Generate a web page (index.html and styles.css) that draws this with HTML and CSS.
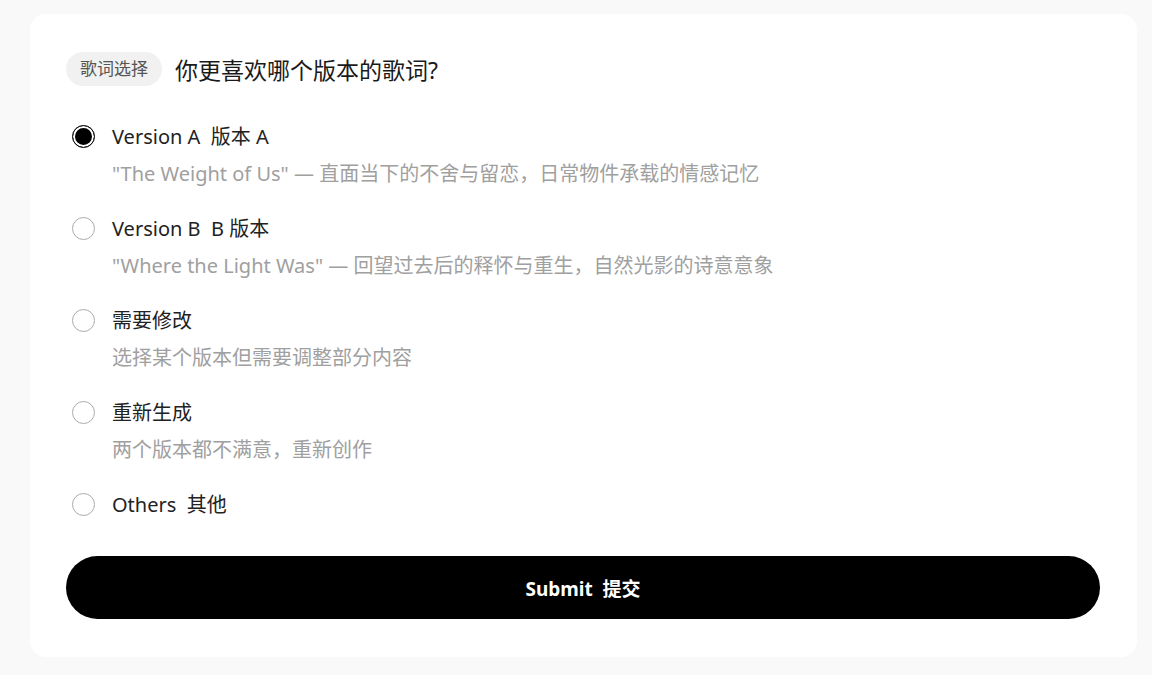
FILE: index.html
```html
<!DOCTYPE html>
<html lang="zh-CN">
<head>
  <meta charset="UTF-8">
  <meta name="viewport" content="width=device-width, initial-scale=1.0">
  <title>歌词选择</title>
  <link rel="stylesheet" href="styles.css">
</head>
<body>
  <div class="card">
    <div class="question">
      <span class="tag">歌词选择</span>
      <span class="question-text">你更喜欢哪个版本的歌词?</span>
    </div>

    <div class="options">
      <label class="option">
        <input type="radio" name="lyrics" checked>
        <span class="option-body">
          <span class="option-label">Version A&nbsp; 版本 A</span>
          <span class="option-desc">"The Weight of Us" — 直面当下的不舍与留恋，日常物件承载的情感记忆</span>
        </span>
      </label>
      <label class="option">
        <input type="radio" name="lyrics">
        <span class="option-body">
          <span class="option-label">Version B&nbsp; B 版本</span>
          <span class="option-desc">"Where the Light Was" — 回望过去后的释怀与重生，自然光影的诗意意象</span>
        </span>
      </label>
      <label class="option">
        <input type="radio" name="lyrics">
        <span class="option-body">
          <span class="option-label">需要修改</span>
          <span class="option-desc">选择某个版本但需要调整部分内容</span>
        </span>
      </label>
      <label class="option">
        <input type="radio" name="lyrics">
        <span class="option-body">
          <span class="option-label">重新生成</span>
          <span class="option-desc">两个版本都不满意，重新创作</span>
        </span>
      </label>
      <label class="option">
        <input type="radio" name="lyrics">
        <span class="option-body">
          <span class="option-label">Others&nbsp; 其他</span>
        </span>
      </label>
    </div>

    <button class="submit-button">Submit&nbsp; 提交</button>
  </div>
</body>
</html>
```

FILE: styles.css
```css
body {
  margin: 0;
  background-color: #f9f9f9;
  font-family: "Noto Sans", "Noto Sans CJK SC", sans-serif;
  color: #222;
}

.card {
  margin: 14px 15px 0 30px;
  height: 643px;
  box-sizing: border-box;
  background-color: #ffffff;
  border-radius: 16px;
  padding: 38px 37px 38px 36px;
  display: flex;
  flex-direction: column;
}

.question {
  display: flex;
  align-items: center;
  height: 34px;
}

.tag {
  background-color: #f1f1f1;
  color: #555;
  font-size: 17px;
  height: 34px;
  line-height: 34px;
  padding: 0 14px;
  border-radius: 17px;
  margin-right: 13px;
}

.question-text {
  font-size: 23px;
  color: #1a1a1a;
}

.options {
  display: flex;
  flex-direction: column;
  gap: 25px;
  margin-top: 36px;
}

.option {
  display: flex;
  align-items: flex-start;
  cursor: pointer;
}

.option input {
  appearance: none;
  -webkit-appearance: none;
  width: 23px;
  height: 23px;
  margin: 3px 17px 0 6px;
  border: 1.5px solid #ababab;
  border-radius: 50%;
  box-sizing: border-box;
  flex-shrink: 0;
  background-color: #fff;
}

.option input:checked {
  border: 1.5px solid #111;
  background-color: #000;
  box-shadow: inset 0 0 0 2px #fff;
}

.option-body {
  display: flex;
  flex-direction: column;
}

.option-label {
  font-size: 20px;
  line-height: 30px;
  color: #222;
}

.option-desc {
  font-size: 20px;
  line-height: 30px;
  margin-top: 7px;
  color: #a0a0a0;
}

.submit-button {
  margin-top: 36px;
  height: 63px;
  border: none;
  border-radius: 32px;
  background-color: #000;
  color: #fff;
  font-family: "Noto Sans", "Noto Sans CJK SC", sans-serif;
  font-size: 19px;
  font-weight: 700;
  cursor: pointer;
}
```
